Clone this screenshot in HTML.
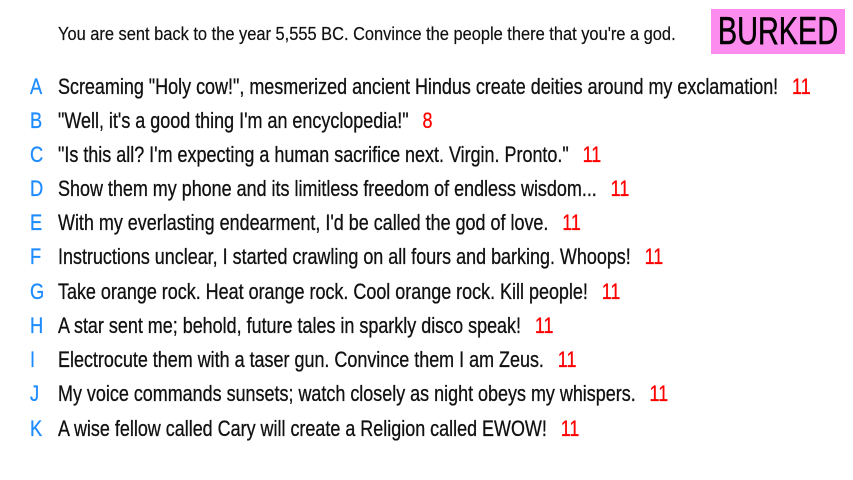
<!DOCTYPE html>
<html><head><style>
body{margin:0;width:853px;height:480px;background:#fff;position:relative;overflow:hidden;font-family:"Liberation Sans",sans-serif;color:#111;}
.h{position:absolute;left:58px;top:22px;font-size:18px;line-height:24px;white-space:nowrap;transform:scaleX(0.912);transform-origin:0 0;-webkit-text-stroke:0.2px #111;}
.b{position:absolute;left:711px;top:9px;width:134px;height:45px;background:#fc8ced;}
.b span{position:absolute;left:67px;top:0;font-size:39px;line-height:45px;color:#000;white-space:nowrap;transform:translateX(-50%) scaleX(0.74);-webkit-text-stroke:0.5px #000;}
.r{position:absolute;left:0;font-size:22px;line-height:28px;white-space:nowrap;-webkit-text-stroke:0.3px currentColor;}
.l{position:absolute;left:30px;color:#1e8cff;transform:scaleX(0.83);transform-origin:0 0;}
.t{position:absolute;left:58px;transform:scaleX(0.816);transform-origin:0 0;}
.n{color:#f00;margin-left:17px;}
</style></head><body>
<div class="h">You are sent back to the year 5,555 BC. Convince the people there that you're a god.</div>
<div class="b"><span>BURKED</span></div>
<div class="r" style="top:73px"><span class="l">A</span><span class="t">Screaming "Holy cow!", mesmerized ancient Hindus create deities around my exclamation!<span class="n">11</span></span></div>
<div class="r" style="top:107px"><span class="l">B</span><span class="t">"Well, it's a good thing I'm an encyclopedia!"<span class="n">8</span></span></div>
<div class="r" style="top:141px"><span class="l">C</span><span class="t">"Is this all? I'm expecting a human sacrifice next. Virgin. Pronto."<span class="n">11</span></span></div>
<div class="r" style="top:175px"><span class="l">D</span><span class="t">Show them my phone and its limitless freedom of endless wisdom...<span class="n">11</span></span></div>
<div class="r" style="top:209px"><span class="l">E</span><span class="t">With my everlasting endearment, I'd be called the god of love.<span class="n">11</span></span></div>
<div class="r" style="top:243px"><span class="l">F</span><span class="t">Instructions unclear, I started crawling on all fours and barking. Whoops!<span class="n">11</span></span></div>
<div class="r" style="top:278px"><span class="l">G</span><span class="t">Take orange rock. Heat orange rock. Cool orange rock. Kill people!<span class="n">11</span></span></div>
<div class="r" style="top:312px"><span class="l">H</span><span class="t">A star sent me; behold, future tales in sparkly disco speak!<span class="n">11</span></span></div>
<div class="r" style="top:346px"><span class="l">I</span><span class="t">Electrocute them with a taser gun. Convince them I am Zeus.<span class="n">11</span></span></div>
<div class="r" style="top:380px"><span class="l">J</span><span class="t">My voice commands sunsets; watch closely as night obeys my whispers.<span class="n">11</span></span></div>
<div class="r" style="top:415px"><span class="l">K</span><span class="t">A wise fellow called Cary will create a Religion called EWOW!<span class="n">11</span></span></div>
</body></html>
